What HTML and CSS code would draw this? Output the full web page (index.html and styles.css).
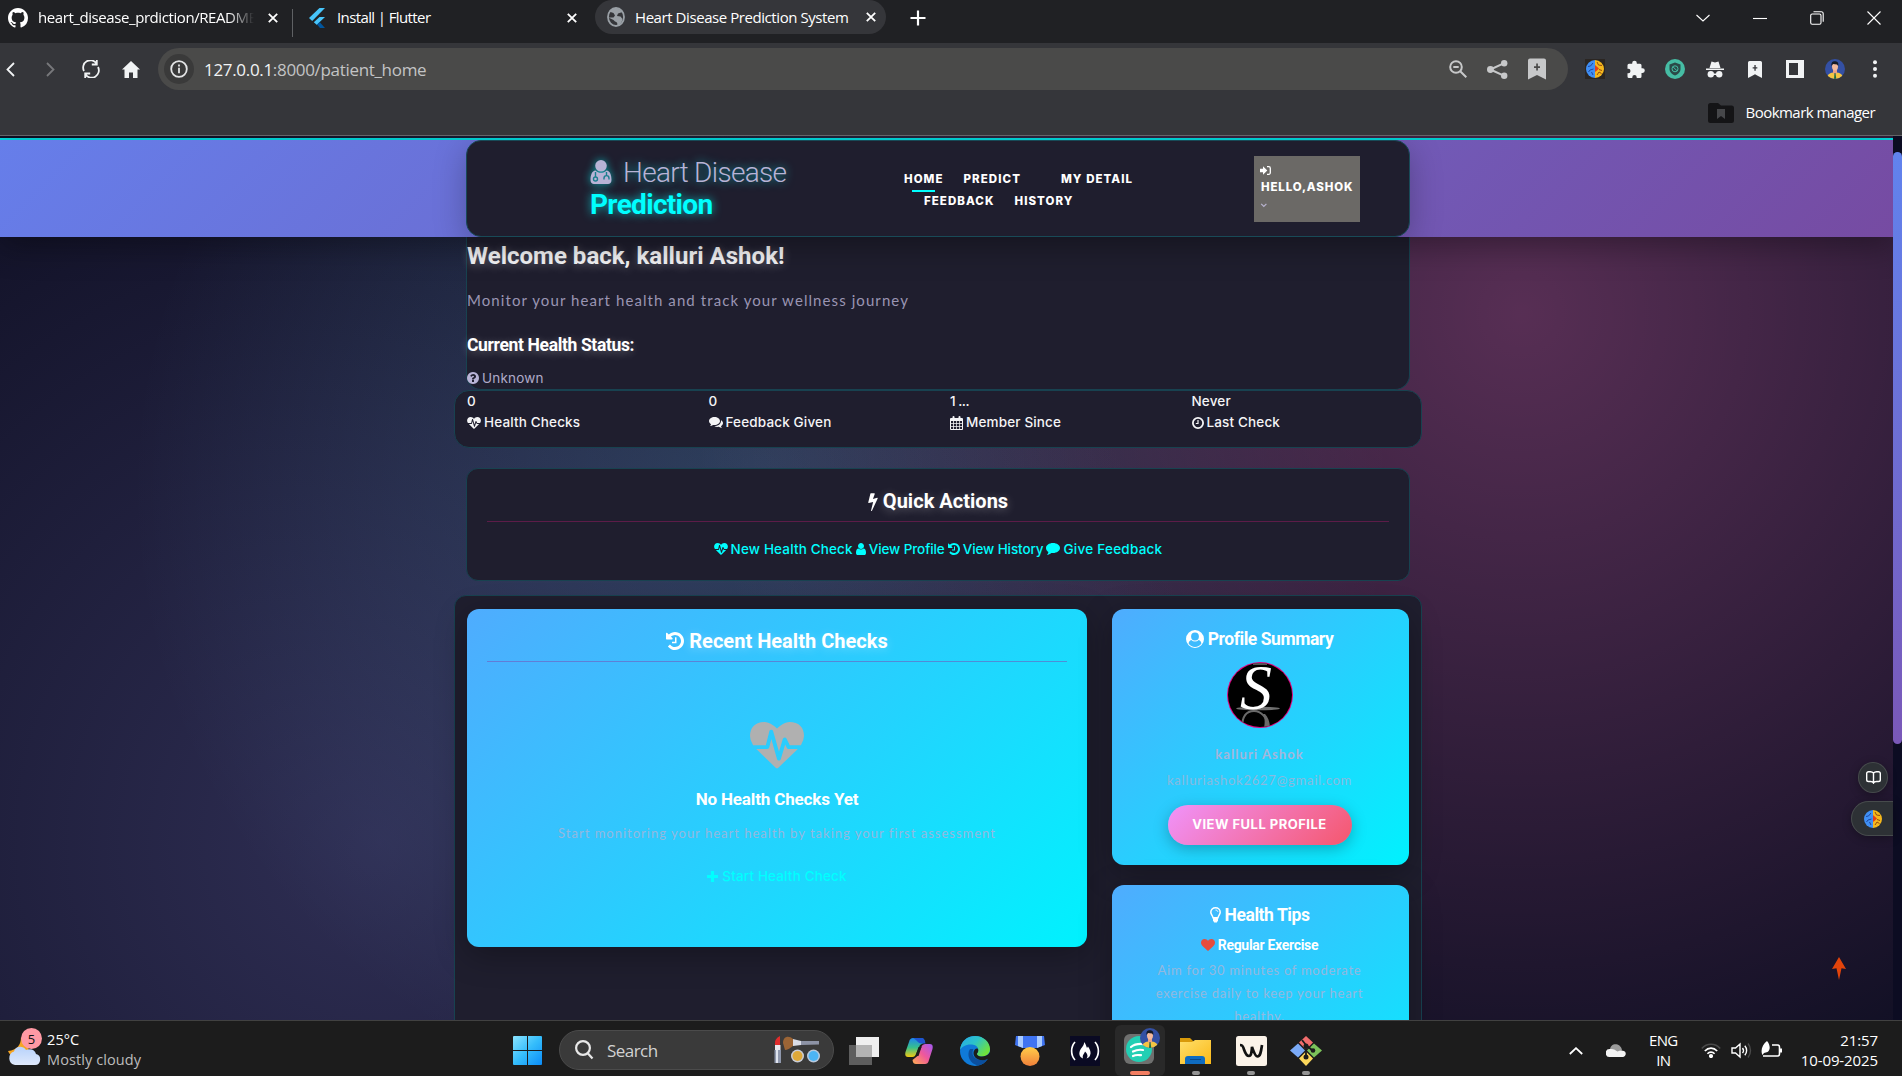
FILE: index.html
```html
<!DOCTYPE html>
<html lang="en">
<head>
<meta charset="utf-8">
<title>Heart Disease Prediction System</title>
<link rel="stylesheet" href="styles.css">
</head>
<body>
<svg class="defs" width="0" height="0" aria-hidden="true">
  <defs>
    <linearGradient id="gWin" x1="0" y1="0" x2="1" y2="1"><stop offset="0" stop-color="#8be4ff"/><stop offset=".5" stop-color="#35bdfb"/><stop offset="1" stop-color="#0b8cf8"/></linearGradient>
    <linearGradient id="gEdge" x1="0" y1="0" x2="1" y2=".6"><stop offset="0" stop-color="#27a8e8"/><stop offset=".5" stop-color="#2cc3c9"/><stop offset="1" stop-color="#6fe23c"/></linearGradient>
    <linearGradient id="gCloud" x1="0" y1="0" x2="0" y2="1"><stop offset="0" stop-color="#b7d2fb"/><stop offset="1" stop-color="#dfe9fb"/></linearGradient>
    <linearGradient id="gCopA" x1="0" y1="0" x2="0" y2="1"><stop offset="0" stop-color="#1e86f0"/><stop offset=".5" stop-color="#37c08c"/><stop offset="1" stop-color="#f3c911"/></linearGradient>
    <linearGradient id="gCopB" x1="1" y1="0" x2="0" y2="1"><stop offset="0" stop-color="#a259f3"/><stop offset=".5" stop-color="#f0589a"/><stop offset="1" stop-color="#ffae52"/></linearGradient>
    <linearGradient id="gMedal" x1="0" y1="0" x2="0" y2="1"><stop offset="0" stop-color="#ffce4a"/><stop offset="1" stop-color="#f0803a"/></linearGradient>
    <linearGradient id="gFolder" x1="0" y1="0" x2="1" y2="1"><stop offset="0" stop-color="#ffdf6b"/><stop offset="1" stop-color="#fbb917"/></linearGradient>
    <clipPath id="cAvatar"><circle cx="33" cy="33" r="32"/></clipPath>
    <clipPath id="cFace"><circle cx="10" cy="10" r="10"/></clipPath>
  </defs>
  <symbol id="heartbeat" viewBox="0 0 1792 1560"><path d="M1280 896h305q-5 6-10 10.500t-9 7.500l-3 4-623 600q-18 18-44 18t-44-18l-624-602q-5-2-21-20h369q22 0 39.500-13.500t22.500-34.500l70-281 190 667q6 20 23 33t39 13q21 0 38-13t23-33l146-485 56 112q18 35 57 35zm512-428q0 145-103 300h-369l-111-221q-8-17-25.500-27t-36.500-8q-45 5-56 46l-129 430-196-686q-6-20-23.500-33t-39.500-13-39 13.500-22 34.500l-116 464h-423q-103-155-103-300 0-220 127-344t351-124q62 0 126.500 21.500t120 58 95.500 68.500 76 68q36-36 76-68t95.500-68.500 120-58 126.500-21.500q224 0 351 124t127 344z"/></symbol>
  <symbol id="bolt" viewBox="448 0 900 1792"><path d="M1333 566q18 20 7 44l-540 1157q-13 25-42 25-4 0-14-2-17-5-25.500-19t-4.500-30l197-808-406 101q-4 1-12 1-18 0-31-11-18-15-13-39l201-825q4-14 16-23t28-9h328q19 0 32 12.500t13 29.500q0 8-5 18l-171 463 396-98q8-2 12-2 19 0 34 15z"/></symbol>
  <symbol id="user" viewBox="256 128 1280 1536"><path d="M1536 1399q0 109-62.500 187t-150.500 78h-854q-88 0-150.500-78t-62.500-187q0-85 8.500-160.500t31.500-152 58.500-131 94-89 134.500-34.500q131 128 313 128t313-128q76 0 134.500 34.500t94 89 58.500 131 31.500 152 8.500 160.500zm-256-887q0 159-112.500 271.500t-271.500 112.500-271.500-112.500-112.500-271.500 112.500-271.500 271.500-112.500 271.500 112.500 112.500 271.500z"/></symbol>
  <symbol id="history" viewBox="128 128 1536 1536"><path d="M1664 896q0 156-61 298t-164 245-245 164-298 61q-172 0-327-72.500t-264-204.500q-7-10-6.500-22.500t8.500-20.500l137-138q10-9 25-9 16 2 23 12 73 95 179 147t225 52q104 0 198.500-40.500t163.500-109.500 109.500-163.500 40.500-198.500-40.500-198.500-109.500-163.500-163.500-109.500-198.500-40.500q-98 0-188 35.500t-160 101.500l137 138q31 30 14 69-17 40-59 40h-448q-26 0-45-19t-19-45v-448q0-42 40-59 39-17 69 14l130 129q107-101 244.500-156.500t284.500-55.500q156 0 298 61t245 164 164 245 61 298zm-640-288v448q0 14-9 23t-23 9h-320q-14 0-23-9t-9-23v-64q0-14 9-23t23-9h224v-352q0-14 9-23t23-9h64q14 0 23 9t9 23z"/></symbol>
  <symbol id="heart" viewBox="0 128 1792 1536"><path d="M896 1664q-26 0-44-18l-624-602q-10-8-27.500-26t-55.500-65.500-68-97.500-53.500-121-23.500-138q0-220 127-344t351-124q62 0 126.500 21.500t120 58 95.500 68.500 76 68q36-36 76-68t95.500-68.500 120-58 126.500-21.500q224 0 351 124t127 344q0 221-229 450l-623 600q-18 18-44 18z"/></symbol>
  <symbol id="question" viewBox="128 128 1536 1536"><path d="M1024 1376v-192q0-14-9-23t-23-9h-192q-14 0-23 9t-9 23v192q0 14 9 23t23 9h192q14 0 23-9t9-23zm256-672q0-88-55.500-163t-138.500-116-170-41q-243 0-371 213-15 24 8 42l132 100q7 6 19 6 16 0 25-12 53-68 86-92 34-24 86-24 48 0 85.500 26t37.500 59q0 38-20 61t-68 45q-63 28-115.500 86.500t-52.500 125.500v36q0 14 9 23t23 9h192q14 0 23-9t9-23q0-19 21.500-49.500t54.500-49.500q32-18 49-28.500t46-35 44.500-48 28-60.500 12.500-81zm384 192q0 209-103 385.500t-279.500 279.500-385.500 103-385.500-103-279.500-279.500-103-385.500 103-385.500 279.500-279.500 385.500-103 385.500 103 279.500 279.500 103 385.500z"/></symbol>
  <symbol id="comments" viewBox="0 0 14 12"><path d="M5.500 0C8.500 0 11 1.800 11 4S8.500 8 5.500 8c-.5 0-1 0-1.400-.1C3.200 8.600 2 9 1 9.100c.5-.5.9-1.100 1-1.900C.8 6.500 0 5.300 0 4c0-2.200 2.500-4 5.500-4z"/><path d="M12 3.200c1.200.7 2 1.700 2 2.900s-.8 2.300-2 3.100c.1.700.5 1.300 1 1.800-1.200-.1-2.300-.5-3.200-1.200-1.400.3-3.300.1-4.400-.7C9 9 12 7 12 4z"/></symbol>
  <symbol id="comment" viewBox="0 0 14 12"><path d="M7 0c3.900 0 7 2.200 7 5s-3.100 5-7 5c-.6 0-1.100 0-1.600-.1C4 11 2.600 11.700 1 11.900c.8-.8 1.300-1.700 1.400-2.900C.9 8.100 0 6.600 0 5c0-2.800 3.100-5 7-5z"/></symbol>
  <symbol id="calendar" viewBox="0 0 13 14"><path fill-rule="evenodd" d="M1 2h1.500V1a1 1 0 0 1 2 0v1h4V1a1 1 0 0 1 2 0v1H12a1 1 0 0 1 1 1v10a1 1 0 0 1-1 1H1a1 1 0 0 1-1-1V3a1 1 0 0 1 1-1zM1 5v2h2.200V5zm3 0v2h2.200V5zm2.900 0v2h2.200V5zm2.900 0v2H12V5zM1 7.700V10h2.200V7.700zm3 0V10h2.200V7.700zm2.900 0V10h2.200V7.700zm2.900 0V10H12V7.700zM1 10.700V13h2.200v-2.300zm3 0V13h2.200v-2.300zm2.900 0V13h2.200v-2.300zm2.900 0V13H12v-2.300z"/></symbol>
  <symbol id="clock" viewBox="0 0 12 12"><circle cx="6" cy="6" r="5.100" fill="none" stroke="currentColor" stroke-width="1.800"/><path d="M6 3v3.500H3.800" fill="none" stroke="currentColor" stroke-width="1.200"/></symbol>
  <symbol id="usercircle" viewBox="0 0 18 18"><path fill-rule="evenodd" d="M9 0a9 9 0 1 1 0 18A9 9 0 0 1 9 0zM9 2.600a3.900 3.900 0 1 0 0 7.800 3.900 3.900 0 0 0 0-7.800zM5.300 9.900c-1.500.3-2.500 1.500-2.700 3.700a7.800 7.800 0 0 0 12.800 0c-.2-2.200-1.200-3.400-2.700-3.700a5.300 5.300 0 0 1-7.400 0z"/></symbol>
  <symbol id="bulb" viewBox="0 0 11 16"><path d="M5.500.8c2.600 0 4.700 1.900 4.700 4.400 0 2.200-2 3.300-2.200 5.600H3C2.800 8.500.8 7.400.8 5.200.8 2.700 2.900.8 5.500.8z" fill="none" stroke="currentColor" stroke-width="1.500"/><path d="M3 10.600h5v3L6.800 15.500H4.200L3 13.600z"/><path d="M5.500 3c1.200 0 2.200.6 2.300 1.800" fill="none" stroke="currentColor" stroke-width=".9"/></symbol>
  <symbol id="doctor" viewBox="0 0 21 24"><path d="M10.500 0a5.800 5.800 0 1 1 0 11.600 5.800 5.800 0 0 1 0-11.600zM5 10.500c1.500 1.500 3.300 2.300 5.500 2.300s4-.8 5.500-2.300c3.500.4 5 4.500 5 9.500 0 2.500-1.500 4-3.500 4h-14C1.500 24 0 22.500 0 20c0-5 1.500-9.100 5-9.500z"/><path class="stetho" d="M5 12v5M13.500 19.500v-1.300c0-3.400 5-3.400 5 0v1.300M16 12v3.500"/><circle class="stetho" cx="5" cy="19" r="2"/></symbol>
  <symbol id="globe" viewBox="0 0 18 20"><ellipse cx="9" cy="10" rx="8" ry="9" fill="none" stroke="#9aa0a6" stroke-width="1.800"/><path d="M2 4.500C4 1 12 0 15.500 5L11 6.500 10 9l3.500.5 2 2.500c-.5 3.500-3 6-5.500 7 1-2.500 0-4-2-4.500L6.500 13 1.500 10.500h5L8 8.500 6.500 6z" fill="#9aa0a6"/></symbol>
  <symbol id="ribbonplus" viewBox="0 0 18 21"><path fill-rule="evenodd" d="M2 0h14a2 2 0 0 1 2 2v19l-5-2.500L9 16.500l-4 2L0 21V2a2 2 0 0 1 2-2zm6.200 5v2.700H6v1.700h2.200V12h1.700V9.400H12V7.700H9.900V5z"/></symbol>
  <symbol id="brain" viewBox="0 0 18 18"><path d="M9 0a9 9 0 0 0 0 18z" fill="#3f8ff5"/><path d="M9 0a9 9 0 0 1 0 18z" fill="#f5b81c"/><path d="M7 3 4.500 6 2 6.500M7.500 9 4 10l-1.500 2M7 15l-1.500-3" fill="none" stroke="#1c3f96" stroke-width=".9"/><path d="m11 2 1.500 3 3.500.5M13 9.500l3 1M11 15l2-3 2.500 1.500" fill="none" stroke="#8a3d10" stroke-width=".9"/><path d="m9 5 4 3.500-2 2L9 12z" fill="#e2401c"/></symbol>
  <symbol id="face" viewBox="0 0 20 20"><g clip-path="url(#cFace)"><path d="M0 0h20v20H0z" fill="#3450a4"/><path d="M2 20c0-5 3-6.500 8-6.500s8 1.500 8 6.500z" fill="#f4c542"/><path d="M8 10h4v4l-2 2-2-2z" fill="#e9a184"/><ellipse cx="10" cy="7.500" rx="3" ry="4" fill="#f5b99c"/><path d="M6.500 7c-.6-4 1.500-5 4-4.700 2.500.2 3.300 2 2.700 4.700L12 5.500 8 5z" fill="#161a26"/><path d="m9.500 14 1 0 .8 6H9z" fill="#1d6b45"/></g></symbol>
</svg>

<div class="screen">
  <div class="tabs">
    <svg class="tab-gh" width="20" height="20" viewBox="0 0 16 16" fill="#fff"><path d="M8 0C3.580 0 0 3.580 0 8c0 3.540 2.290 6.530 5.470 7.590.4.070.55-.17.55-.38 0-.19-.01-.82-.01-1.490-2.010.37-2.530-.49-2.690-.94-.09-.23-.48-.94-.82-1.130-.28-.15-.68-.52-.01-.53.63-.01 1.080.58 1.230.82.72 1.210 1.870.87 2.330.66.070-.52.280-.87.510-1.070-1.780-.2-3.640-.89-3.640-3.950 0-.87.310-1.590.820-2.150-.08-.2-.36-1.020.080-2.120 0 0 .67-.21 2.200.820.640-.18 1.320-.27 2-.27s1.360.090 2 .27c1.530-1.040 2.200-.82 2.200-.82.440 1.100.160 1.920.080 2.120.510.560.820 1.270.820 2.150 0 3.070-1.870 3.750-3.650 3.950.290.250.540.730.540 1.480 0 1.070-.01 1.930-.01 2.200 0 .210.150.460.550.380A8.010 8.010 0 0 0 16 8c0-4.420-3.580-8-8-8z"/></svg>
    <span class="tab-title faded">heart_disease_prdiction/README</span>
    <svg class="x1" width="10" height="10" viewBox="0 0 10 10"><path class="cross" d="M.8.800l8.400 8.400M9.200.8.800 9.200"/></svg>
    <i class="tab-sep"></i>
    <svg class="tab-fl" width="16" height="20" viewBox="0 0 16 20"><path d="M10.500 0H16L3.200 13 0 10z" fill="#47c5fb"/><path d="M10.500 9H16l-5.800 5.600L8 17l-3.200-2.800z" fill="#47c5fb"/><path d="m8 16.500 2.600-2.400L16 20h-5z" fill="#00569e"/></svg>
    <span class="tab-title narrow">Install | Flutter</span>
    <svg class="x2" width="10" height="10" viewBox="0 0 10 10"><path class="cross" d="M.8.800l8.400 8.400M9.200.8.800 9.200"/></svg>
    <div class="tab-active">
      <svg width="18" height="20"><use href="#globe"/></svg>
      <span class="tab-title">Heart Disease Prediction System</span>
      <svg width="10" height="10" viewBox="0 0 10 10"><path class="cross" d="M.8.800l8.400 8.400M9.200.8.800 9.200"/></svg>
    </div>
    <svg class="tab-new" width="16" height="16" viewBox="0 0 16 16"><path d="M8 .5v15M.5 8h15" stroke="#fff" stroke-width="2.200"/></svg>
    <div class="win-ctl">
      <svg width="14" height="14" viewBox="0 0 14 14"><path d="m.5 4 6.500 6 6.500-6"/></svg>
      <svg width="14" height="14" viewBox="0 0 14 14"><path d="M0 7.500h14"/></svg>
      <svg width="14" height="14" viewBox="0 0 14 14"><rect x=".7" y="3" width="10.300" height="10.300" rx="1.500"/><path d="M3.500.7h7.700a2 2 0 0 1 2 2v8"/></svg>
      <svg width="14" height="14" viewBox="0 0 14 14"><path d="m.5.500 13 13M13.500.500l-13 13"/></svg>
    </div>
  </div>

  <div class="toolbar">
    <svg class="t-back" width="9" height="15" viewBox="0 0 9 15"><path d="M8 1 1.500 7.500 8 14" fill="none" stroke="#f1f3f4" stroke-width="1.800"/></svg>
    <svg class="t-fwd" width="9" height="15" viewBox="0 0 9 15"><path d="m1 1 6.500 6.500L1 14" fill="none" stroke="#77787b" stroke-width="1.800"/></svg>
    <svg class="t-reload" width="18" height="18" viewBox="0 0 18 18"><path d="M14.500 3.500A7.300 7.300 0 0 0 2 11M3.500 14.500A7.300 7.300 0 0 0 16 7M14.800 0v4.500h-5M3.200 18v-4.500h5" fill="none" stroke="#f1f3f4" stroke-width="1.800"/></svg>
    <svg class="t-home" width="18" height="17" viewBox="0 0 18 17"><path d="M9 0l9 8.500h-2.500V17H11v-5.500H7V17H2.500V8.500H0z" fill="#f1f3f4"/></svg>
    <div class="omnibox">
      <span class="info"><svg width="18" height="18" viewBox="0 0 18 18"><circle cx="9" cy="9" r="7.800" fill="none" stroke="#e4e5e6" stroke-width="1.800"/><path d="M9 7.800v5.500M9 4.500v2" stroke="#e4e5e6" stroke-width="1.800"/></svg></span>
      <span class="url"><b>127.0.0.1</b>:8000/patient_home</span>
      <svg width="18" height="18" viewBox="0 0 18 18" fill="none" stroke="#c7c8c9" stroke-width="2"><circle cx="7" cy="7" r="5.800"/><path d="m11 11 6.300 6.300M4.300 7h5.400"/></svg>
      <svg width="21" height="19" viewBox="0 0 21 19" fill="#c7c8c9"><circle cx="3.400" cy="9.500" r="3.400"/><circle cx="17.200" cy="3.200" r="3.200"/><circle cx="17.200" cy="15.800" r="3.200"/><path d="m3.400 9.500 13.800-6.300M3.400 9.500l13.800 6.300" stroke="#c7c8c9" stroke-width="2"/></svg>
      <svg width="18" height="22" fill="#c7c8c9"><use href="#ribbonplus"/></svg>
    </div>
    <div class="exts">
      <svg width="20" height="20" viewBox="-1 -1 20 20"><path d="M-1-1h20v20H-1z" fill="#2b2622"/><use href="#brain" width="18" height="18"/></svg>
      <svg width="19" height="19" viewBox="0 0 19 19" fill="#f1f3f4"><path d="M6.200 3.800V3a2.300 2.300 0 0 1 4.600 0v.8h3.200A1.500 1.500 0 0 1 15.500 5.300v3h1a2.300 2.300 0 0 1 0 4.600h-1v3.600A1.500 1.500 0 0 1 14 18h-3.300v-.8a2.200 2.200 0 0 0-4.400 0v.8H3a1.500 1.500 0 0 1-1.500-1.500v-3.300h.8a2.200 2.200 0 0 0 0-4.400h-.8V5.300A1.500 1.500 0 0 1 3 3.800z"/></svg>
      <svg width="20" height="20" viewBox="0 0 20 20"><circle cx="10" cy="10" r="10" fill="#46bda4"/><path d="m10 3.500 5.500 2V10c0 3-2.500 5.500-5.500 6.500C7 15.500 4.500 13 4.500 10V5.500z" fill="#2b4a48"/><circle cx="10" cy="9.800" r="3" fill="none" stroke="#46bda4"/><path d="m8 7.800 4 4" stroke="#46bda4"/></svg>
      <svg width="18" height="17" viewBox="0 0 18 17" fill="#f1f3f4"><path d="M5.500.5 9 1.500l3.500-1L14.500 7h-11zM0 7.500h18V9H0z"/><circle cx="4.800" cy="13.300" r="3.200"/><circle cx="13.200" cy="13.300" r="3.200"/><path d="M6 12.500h6v1.500H6z"/></svg>
      <svg width="14" height="17" viewBox="0 0 18 21" preserveAspectRatio="none" fill="#f1f3f4"><use href="#ribbonplus" width="18" height="21"/></svg>
      <svg width="18" height="18" viewBox="0 0 18 18"><path fill-rule="evenodd" d="M0 0h18v18H0zm3 3v12h9V3z" fill="#f1f3f4"/></svg>
      <svg width="20" height="20"><use href="#face"/></svg>
      <svg width="4" height="18" viewBox="0 0 4 18" fill="#f1f3f4"><circle cx="2" cy="2.200" r="2"/><circle cx="2" cy="9" r="2"/><circle cx="2" cy="15.800" r="2"/></svg>
    </div>
  </div>

  <div class="bookmarks">
    <svg width="26" height="20" viewBox="0 0 26 20"><path d="M2.500 0H10l3 2.500h10.500A2.500 2.500 0 0 1 26 5v12.500a2.500 2.500 0 0 1-2.500 2.500h-21A2.500 2.500 0 0 1 0 17.500v-15A2.500 2.500 0 0 1 2.500 0z" fill="#141416"/><path d="M9 6h8v10l-4-3-4 3z" fill="#46474a"/></svg>
    <span>Bookmark manager</span>
  </div>

  <main class="page">
    <div class="progress"></div>
    <header class="site-header">
      <div class="header-card">
        <div class="brand">
          <div class="brand-top"><svg width="22" height="24"><use href="#doctor"/></svg><span>Heart Disease</span></div>
          <strong>Prediction</strong>
        </div>
        <nav class="nav">
          <div class="nav-row"><a class="current">HOME</a><a>PREDICT</a><a class="wide">MY DETAIL</a></div>
          <div class="nav-row second"><a>FEEDBACK</a><a>HISTORY</a></div>
        </nav>
        <div class="account">
          <svg width="11" height="9" viewBox="0 0 11 9" fill="#fff"><path d="M0 2.700h3V.3L7.300 4.500 3 8.700V6.300H0z"/><path d="M7 .7h1.800a1.500 1.500 0 0 1 1.500 1.500v4.600a1.500 1.500 0 0 1-1.500 1.500H7" fill="none" stroke="#fff" stroke-width="1.300"/></svg>
          <span>HELLO,ASHOK</span>
          <svg width="8" height="5" viewBox="0 0 8 5"><path d="m1.200.8 2.600 2.700L6.400.8" fill="none" stroke="#b8b3cf" stroke-width="1.200"/></svg>
        </div>
      </div>
    </header>

    <div class="content">
      <section class="welcome">
        <h1>Welcome back, kalluri Ashok!</h1>
        <p>Monitor your heart health and track your wellness journey</p>
        <h2>Current Health Status:</h2>
        <div class="unknown"><svg width="12" height="12"><use href="#question"/></svg><span>Unknown</span></div>
      </section>

      <section class="stats">
        <div><b>0</b><span><svg width="14" height="12"><use href="#heartbeat"/></svg>Health Checks</span></div>
        <div><b>0</b><span><svg width="14" height="12"><use href="#comments"/></svg>Feedback Given</span></div>
        <div><b class="tight">1 ...</b><span><svg width="13" height="14"><use href="#calendar"/></svg>Member Since</span></div>
        <div><b>Never</b><span><svg width="12" height="12"><use href="#clock"/></svg>Last Check</span></div>
      </section>

      <section class="quick">
        <h2 class="ruled"><svg width="10" height="19"><use href="#bolt"/></svg>Quick Actions</h2>
        <div class="links">
          <a class="l1"><svg width="14" height="12"><use href="#heartbeat"/></svg>New Health Check</a>
          <a class="l2"><svg width="10" height="12"><use href="#user"/></svg>View Profile</a>
          <a class="l2"><svg width="12" height="12"><use href="#history"/></svg>View History</a>
          <a class="l3"><svg width="14" height="12"><use href="#comment"/></svg>Give Feedback</a>
        </div>
      </section>

      <section class="board">
        <article class="card recent">
          <h2 class="ruled"><svg width="18" height="18"><use href="#history"/></svg>Recent Health Checks</h2>
          <svg class="big-heart" width="54" height="47"><use href="#heartbeat"/></svg>
          <h3>No Health Checks Yet</h3>
          <p>Start monitoring your heart health by taking your first assessment</p>
          <a><svg width="11" height="11" viewBox="0 0 11 11"><path d="M3.900 0h3.200v3.900H11v3.200H7.100V11H3.900V7.100H0V3.900h3.900z"/></svg>Start Health Check</a>
        </article>
        <div class="side">
          <article class="card profile">
            <h3><svg width="18" height="18"><use href="#usercircle"/></svg>Profile Summary</h3>
            <svg class="avatar" width="66" height="66" viewBox="0 0 66 66"><circle cx="33" cy="33" r="33" fill="#e6007e"/><circle cx="33" cy="33" r="32"/><g clip-path="url(#cAvatar)"><ellipse cx="31" cy="46.500" rx="22" ry="1.800" fill="#6f6f6f"/><path d="M26 2h14" stroke="#aaa"/><path d="M15 66C15 54 20 49 27 49s13 6 15 17" fill="none" stroke="#6a6a6a" stroke-width="2"/><path d="M38 52c3 3 5 8 5 14h-6c1-5 1-10-1-14z" fill="#6a6a6a"/><text x="13" y="46.500" class="mono" fill="#fff">S</text></g></svg>
            <p class="name">kalluri Ashok</p>
            <p class="mail">kalluriashok2627@gmail.com</p>
            <a class="btn">VIEW FULL PROFILE</a>
          </article>
          <article class="card tips">
            <h3><svg width="11" height="16"><use href="#bulb"/></svg>Health Tips</h3>
            <h4><svg width="14" height="12" fill="#e74c3c"><use href="#heart"/></svg>Regular Exercise</h4>
            <p>Aim for 30 minutes of moderate<br>exercise daily to keep your heart<br>healthy.</p>
          </article>
        </div>
      </section>
    </div>

    <div class="scroll"><i></i></div>
    <div class="float reader"><svg width="15" height="13" viewBox="0 0 15 13" fill="none" stroke="#fff" stroke-width="1.400"><path d="M7.500 2C6.500 1 5.500.7 4.500.7h-2A1.800 1.800 0 0 0 .7 2.500v6.200a1.800 1.800 0 0 0 1.800 1.800h2c1.200 0 2.500.5 3 1.500.5-1 1.800-1.500 3-1.500h2a1.800 1.800 0 0 0 1.800-1.800V2.500A1.800 1.800 0 0 0 12.500.7h-2c-1 0-2 .3-3 1.300zm0 0v10.500"/></svg></div>
    <div class="float helper"><svg width="18" height="18"><use href="#brain"/></svg></div>
    <svg class="to-top" width="14" height="23" viewBox="0 0 14 23"><path d="M7 0l7 12-4.500-.8L7 23 4.500 11.200 0 12z" fill="#e2440b"/></svg>
  </main>

  <footer class="taskbar">
    <div class="weather">
      <svg width="34" height="38" viewBox="0 0 34 38"><path d="M13 9c0 8-4 13-13 14 2 5 8 9 15 7 6-2 7-10 4-14z" fill="#f5a524"/><path d="M7 37a7 7 0 0 1-1-13.500C7 18 15 17 18 22c5-2 9 0 10 4a5.600 5.600 0 0 1-1 11z" fill="url(#gCloud)"/><circle cx="23.500" cy="10.500" r="10.500" fill="#ff99a4"/><text x="23.500" y="15.500" text-anchor="middle" class="badge">5</text></svg>
      <div class="w-text"><span>25°C</span><span class="dim">Mostly cloudy</span></div>
    </div>
    <svg class="win" width="29" height="29" viewBox="0 0 29 29" fill="url(#gWin)"><path d="M1 0h13v14H0V1a1 1 0 0 1 1-1zM15 0h13a1 1 0 0 1 1 1v13H15zM0 15h14v14H1a1 1 0 0 1-1-1zM15 15h14v13a1 1 0 0 1-1 1H15z"/></svg>
    <div class="search">
      <svg width="19" height="20" viewBox="0 0 19 20" fill="none" stroke="#e8e8e8" stroke-width="2.200"><circle cx="8" cy="8" r="6.900"/><path d="m12.500 13 5 5.500"/></svg>
      <span>Search</span>
      <svg width="47" height="28" viewBox="0 0 47 28"><path d="M1 7c0-4 3-6 5-7v9H1z" fill="#e02c2c"/><path d="M1 9h5.500v5H1z" fill="#e8e8ee"/><path d="M.5 14H7v13H.5z" fill="#8f98ad"/><path d="M2 14h2v13H2z" fill="#dfe4ee"/><path d="M9 7c0-7 6-8 10-4l1 6c-3 3-7 5-9 5z" fill="#9b6536"/><path d="M19 3l8 2v4l-8 1z" fill="#d9dce6"/><path d="M27 5h18v3.500L27 9z" fill="#8d93a6"/><circle cx="23.500" cy="20" r="6.500" fill="#c9ccd6"/><circle cx="23.500" cy="20" r="5" fill="#dda83a"/><circle cx="39.500" cy="20" r="6.500" fill="#b9c9dd"/><circle cx="39.500" cy="20" r="5" fill="#4db4f4"/></svg>
    </div>
    <div class="apps">
      <span class="app"><svg width="30" height="28" viewBox="0 0 30 28"><path d="M7 0h23v20H7z" fill="#efefef"/><path d="M0 8h23v20H0z" fill="#666" opacity=".9"/><path d="M7 8h16v12H7z" fill="#b3b3b3"/></svg></span>
      <span class="app"><svg width="28" height="26" viewBox="0 0 28 26"><path d="M8 0h8c2 0 3 1 4 4l-5 3-4 9c-1 3-3 3-5 3H3c-3 0-3-3-2.500-5L4 4c.8-3 2-4 4-4z" fill="url(#gCopA)"/><path d="M20 26h-9c-2 0-3-1-3.500-4l5-4 4-9c1-3 3-3 5-3H25c3 0 3 3 2.500 5L24 22c-.8 3-2 4-4 4z" fill="url(#gCopB)"/><path d="M8 0h9c2 0 3 2 3.500 5.500h-4C13 5.500 12 2 8 0z" fill="#1d55d0"/><path d="m13.500 9 3 0-3 9h-3z" fill="#1c1c1c"/></svg></span>
      <span class="app"><svg width="30" height="30" viewBox="0 0 30 30"><circle cx="15" cy="15" r="15" fill="#0f7ad8"/><path d="M0 14C1 5 7 0 15 0c9 0 15 6.500 15 13 0 5-4 7.500-8 7.500-3.500 0-5.500-1.500-5-3 2.500-2.500 2-8.500-5-9C6 8 1.500 11 0 14z" fill="url(#gEdge)"/><path d="M10 13c-4 6 0 15 8 16.500 4-.5 8-3.500 9.500-6.500-6 3-15 0-15-6 0-2 .5-3 1-4z" fill="#0b4f9e"/><path d="M17 17.500c-.5 1.500 1.500 3 5 3 2.500 0 5-1 6.500-2.500L30 16v6l-2.500 1c-6 3-14 0-14-6 0-3 3-5.500 4.500-4 .5 2 .3 3-1 4.500z" fill="#1c1c1c"/></svg></span>
      <span class="app"><svg width="30" height="30" viewBox="0 0 30 30"><path d="M1 0h28l1 9-8 3H8L0 9z" fill="#3f74f2"/><path d="M3 0h5v12l-5-2zM22 0h5v10l-5 2z" fill="#a9cbff"/><circle cx="15" cy="20.500" r="9.500" fill="url(#gMedal)"/></svg></span>
      <span class="app"><svg width="30" height="30" viewBox="0 0 30 30"><path d="M0 0h30v30H0z" fill="#0a0a23"/><path d="M5 6c-4.500 5-4.500 13 0 18M25 6c4.500 5 4.500 13 0 18" fill="none" stroke="#fff" stroke-width="1.700"/><path d="M14 6c2 2 2 4 3 6l1-1.500c2 3 3.500 6 2 9-.8 1.800-2 2.500-3.500 3 1.500-2 1.500-4-1.500-7-.5 2-3 3.500-2 7-4-1.500-4.500-5.500-2.500-9C12 11 14.500 9 14 6z" fill="#fff"/></svg></span>
      <span class="app running"><svg width="38" height="38" viewBox="0 0 38 38"><rect x="1" y="7" width="30" height="30" rx="6" fill="#6f706f"/><circle cx="16" cy="22" r="13" fill="#22cfb4"/><path d="M8 20c4-3.500 10-3.500 15-2.700M10 24.500c4-2 7-2 10-1.500M10 29c3-1.500 5-1 8-.8" fill="none" stroke="#fff" stroke-width="2.200" stroke-linecap="round"/><use href="#face" x="17" y="1" width="20" height="20"/></svg><i class="bar"></i></span>
      <span class="app"><svg width="31" height="27" viewBox="0 0 31 27"><path d="M0 1h10l3 3v3H0z" fill="#d99a0a"/><path d="M0 5h12l3-2h16v24H0z" fill="url(#gFolder)"/><path d="M5 27v-5a3 3 0 0 1 3-3h14a3 3 0 0 1 3 3v5z" fill="#0f6cc0"/><path d="M10 22.500h11" stroke="#0b4a8a"/></svg><i class="dot"></i></span>
      <span class="app"><svg width="31" height="30" viewBox="0 0 31 30"><rect width="31" height="30" rx="2.500" fill="#fbf3e9"/><path d="M4 9c3 0 3 1.500 4 4.500S10.500 20 13 20s2.500-4 3-9c1.500 4 3 9.500 5.500 9.500 3 0 3.500-5 4.500-11.500" fill="none" stroke="#111" stroke-width="2.700"/></svg><i class="dot"></i></span>
      <span class="app"><svg width="32" height="30" viewBox="0 0 32 30"><path d="m16 0 7 6.500-7 7-7-7z" fill="#f26d6d"/><path d="m8 7.500 7 7-7 7-8-7z" fill="#7baaf7"/><path d="m24 7.500 8 7-8 7-7-7z" fill="#7cc35a"/><path d="m16 15.500 7 7L16 30l-7-7.500z" fill="#fbd75b"/><path d="M12 4l4 5v13M16 9l7 6" fill="none" stroke="#1c1c1c" stroke-width="1.800"/><circle cx="16" cy="10" r="2.500" fill="#1c1c1c"/><circle cx="16" cy="21" r="2.500" fill="#1c1c1c"/><circle cx="23" cy="14.500" r="2.300" fill="#1c1c1c"/></svg><i class="dot"></i></span>
    </div>
    <div class="tray">
      <svg class="up" width="14" height="8" viewBox="0 0 14 8"><path d="m.8 7 6.200-5.800L13.200 7" fill="none" stroke="#fff" stroke-width="1.800"/></svg>
      <svg class="cloud" width="20" height="13" viewBox="0 0 20 13"><path d="M4 6c0-7 10-8 12 0l-6 6z" fill="#9b9b9b"/><path d="M4 13a4 4 0 0 1-.5-8c4-.5 6 1 8 2.500 2-1 4.500-1.500 6.500-.5a3.200 3.200 0 0 1-.8 6z" fill="#f3f3f3"/></svg>
      <div class="lang"><span>ENG</span><span>IN</span></div>
      <svg class="wifi" width="20" height="15" viewBox="0 0 20 15" fill="none" stroke="#fff" stroke-width="1.600"><path d="M.8 5.500c5-5.600 13.400-5.600 18.400 0" stroke="#4a4a4a"/><path d="M3.800 8c3.600-3.800 8.800-3.800 12.400 0M6.400 10.800c2-2.300 5.200-2.300 7.200 0"/><circle cx="10" cy="13" r="1.300" fill="#fff"/></svg>
      <svg class="vol" width="21" height="17" viewBox="0 0 21 17" fill="none" stroke="#fff" stroke-width="1.400"><path d="M1 6h3.500L9 2v13l-4.500-4H1zM11.500 6a4 4 0 0 1 0 5M13.800 3.800a7 7 0 0 1 0 9.400"/><path d="M17 1.500a11 11 0 0 1 0 14" stroke="#4a4a4a"/></svg>
      <svg class="bat" width="21" height="17" viewBox="0 0 21 17"><path d="M11 4h5.500a2 2 0 0 1 2 2v7a2 2 0 0 1-2 2H2" fill="none" stroke="#fff" stroke-width="1.600"/><path d="M19 7.500h2v4h-2zM6 0c3.500 4 3.500 9 .5 11L3 12l-1.500 2-.5-1C-.5 8 2 3 6 0z" fill="#fff"/></svg>
      <div class="clock"><span>21:57</span><span>10-09-2025</span></div>
    </div>
  </footer>
</div>
</body>
</html>
```
FILE: styles.css
```css
* { box-sizing: border-box; }
body { margin: 0; background: #0a0a1f; font-family: "Open Sans", sans-serif; }
h1, h2, h3, h4, p { margin: 0; }
svg { display: block; flex: none; }
svg.defs { position: absolute; }
.screen { width: 1902px; height: 1076px; display: flex; flex-direction: column; overflow: hidden; white-space: nowrap; }

/* Browser tabs */
.tabs { height: 43px; flex: none; background: #202124; display: flex; align-items: flex-start; }
.tab-gh { margin: 8px 10px 0 8px; }
.tab-title { font-size: 15px; line-height: 34px; color: #fff; letter-spacing: -.43px; }
.tab-title.faded { width: 216px; overflow: hidden; letter-spacing: -.42px; -webkit-mask-image: linear-gradient(90deg, #000 88%, transparent); mask-image: linear-gradient(90deg, #000 88%, transparent); }
.tab-title.narrow { width: 224px; letter-spacing: -.61px; }
.cross { fill: none; stroke: #fff; stroke-width: 1.800; }
.x1 { margin: 13px 14px 0; }
.tab-sep { width: 1px; height: 28px; margin-top: 9px; background: #5f6164; }
.tab-fl { margin: 8px 12px 0 16px; }
.x2 { margin: 13px 18px 0 6px; }
.tab-active { width: 291px; height: 34px; border-radius: 17px; background: #35363a; display: flex; align-items: center; gap: 10px; padding: 0 0 0 12px; }
.tab-active .tab-title { width: 221px; }
.tab-new { margin: 10px 0 0 24px; }
.win-ctl { margin: 11px 21px 0 auto; display: flex; gap: 43px; fill: none; stroke: #fff; stroke-width: 1.100; }

/* Address bar */
.toolbar { height: 54px; flex: none; padding-bottom: 2px; background: #35363a; display: flex; align-items: center; }
.t-back { margin-left: 6px; }
.t-fwd { margin-left: 31px; }
.t-reload { margin-left: 27px; }
.t-home { margin-left: 22px; }
.omnibox { width: 1410px; height: 42px; margin-left: 18px; border-radius: 21px; background: #4a4a49; display: flex; align-items: center; padding: 0 22px 0 6px; gap: 20px; }
.info { width: 30px; height: 30px; border-radius: 50%; background: #3a3a3a; display: grid; place-items: center; }
.url { margin: 0 auto 0 -10px; font-size: 17px; letter-spacing: -.32px; color: #c3c4c5; }
.url b { font-weight: 400; color: #f1f3f4; }
.exts { flex: 1; display: grid; grid-template-columns: repeat(8, 40px); place-items: center; padding-left: 7px; }
.bookmarks { height: 39px; flex: none; background: #35363a; border-bottom: 1px solid #646568; display: flex; justify-content: flex-end; gap: 12px; padding: 6px 27px 0 0; }
.bookmarks span { font-size: 15px; line-height: 19px; letter-spacing: -.55px; color: #fff; }

/* Page */
.page { position: relative; flex: 1; min-height: 0; overflow: hidden; padding: 2px 9px 0 0;
  background: radial-gradient(circle at 20% 80%, rgba(120, 119, 198, .3) 0%, transparent 50%),
    radial-gradient(circle at 80% 20%, rgba(255, 119, 198, .3) 0%, transparent 50%),
    radial-gradient(circle at 40% 40%, rgba(120, 219, 255, .2) 0%, transparent 50%), #0f0f23; }
.progress { height: 2px; background: #00dfe2; }
.site-header { position: relative; height: 97px; padding: 0 0 0 466px; background: linear-gradient(135deg, #667eea, #764ba2); box-shadow: 0 8px 32px rgba(0, 0, 0, .35); }
.header-card { width: 944px; height: 97px; border: 1px solid #184a57; border-radius: 15px; background: #1f1e2e; box-shadow: 0 8px 32px rgba(0, 0, 0, .25); display: grid; grid-template-columns: 314px 350px 106px; padding-left: 123px; clip-path: inset(0 -50px 0 -50px); }
.brand { padding: 16px 0 0 1px; font: 300 28px/32px Roboto, sans-serif; letter-spacing: -.69px; color: #b8b3d6; text-shadow: 0 0 10px rgba(0, 255, 255, .6); }
.brand-top { display: flex; gap: 11px; }
.brand-top svg { margin: 3px 0 0 -1px; fill: #b8b3d6; filter: drop-shadow(0 0 4px rgba(0, 255, 255, .6)); }
.stetho { fill: none; stroke: #1b7e8e; stroke-width: 1.400; }
.brand strong { display: block; margin-left: -1px; font-weight: 700; color: #0ff; text-shadow: 0 0 10px rgba(0, 255, 255, .7); }
.nav { padding-top: 27px; }
.nav-row { display: flex; gap: 20px; font: 800 11.500px/22px Inter, sans-serif; letter-spacing: 1.050px; color: #fff; }
.nav-row.second { padding-left: 20px; }
.nav .wide { margin-left: 20px; }
.current { position: relative; }
.current::after { content: ""; position: absolute; left: 8px; bottom: -2px; width: 23px; height: 2px; background: #0ff; }
.account { height: 66px; margin-top: 15px; padding: 10px 6px; background: #6b6966; display: flex; flex-direction: column; }
.account span { font: 800 11.500px/22px Inter, sans-serif; letter-spacing: .85px; color: #fff; margin: 1px 0 5px 1px; }

.content { width: 944px; margin-left: 466px; }
.welcome { height: 153px; padding-top: 3px; border: 1px solid #184250; border-top: 0; border-radius: 0 0 15px 15px; background: #1f1e2e; color: #fff; }
.welcome h1 { font: 700 24px/32px Roboto, sans-serif; letter-spacing: .02px; text-shadow: 0 2px 10px rgba(255, 255, 255, .3); color: #f4f4f6; }
.welcome p { margin-top: 16px; font: 400 15px/24px Lato, sans-serif; letter-spacing: 1.080px; color: #9a95b3; }
.welcome h2 { margin-top: 21px; font: 700 17.500px/24px Roboto, sans-serif; letter-spacing: -.36px; text-shadow: 0 2px 10px rgba(255, 255, 255, .3); }
.unknown { margin-top: 11px; display: flex; align-items: center; gap: 3px; font: 400 13.500px/20px Inter, sans-serif; letter-spacing: .2px; color: #b0abc9; fill: #b8b3d6; }
.stats { height: 58px; margin: 0 -12px; padding: 0 0 0 12px; border: 1px solid #184250; border-radius: 15px; background: #1f1e2e; display: grid; grid-template-columns: repeat(4, 241.500px); color: #f4f4f6; fill: #f4f4f6; font: 500 13.500px/21px Inter, sans-serif; letter-spacing: .15px; }
.stats b { display: block; font-weight: 500; }
.stats b.tight { letter-spacing: -.5px; }
.stats span { display: flex; align-items: center; gap: 3px; }
.quick { height: 113px; margin-top: 20px; padding: 17px 20px 0; border: 1px solid #184250; border-radius: 12px; background: #1f1e2e; }
.ruled { display: flex; justify-content: center; align-items: center; gap: 5px; padding-bottom: 5px; border-bottom: 1px solid #5c1c48; font: 700 20px/30px Roboto, sans-serif; letter-spacing: .02px; color: #fff; fill: #fff; text-shadow: 0 2px 10px rgba(255, 255, 255, .3); }
.links { margin-top: 17px; display: flex; justify-content: center; gap: 3px; font: 500 13.500px/20px Inter, sans-serif; color: #0ff; fill: #0ff; }
.links a { display: flex; align-items: center; gap: 3px; }
.l1 { letter-spacing: .15px; }
.l2 { letter-spacing: -.1px; }
.l3 { letter-spacing: .25px; }
.board { height: 560px; margin: 14px -12px 0; padding: 13px 12px; border: 1px solid #184250; border-radius: 12px; background: #1f1e2e; display: flex; align-items: flex-start; gap: 25px; }
.card { border-radius: 12px; background: linear-gradient(135deg, #4facfe, #00f2fe); box-shadow: 0 8px 32px rgba(0, 0, 0, .3); display: flex; flex-direction: column; align-items: center; color: #fff; fill: #fff; }
.recent { width: 620px; flex: none; height: 338px; padding: 17px 20px 0; }
.recent .ruled { align-self: stretch; border-color: rgba(120, 80, 180, .55); }
.big-heart { margin-top: 60px; fill: #b0b0b0; }
.recent h3 { margin-top: 18px; font: 700 17px/24px Roboto, sans-serif; letter-spacing: -.15px; }
.recent p { margin-top: 12px; font: 400 13px/20px Lato, sans-serif; letter-spacing: 1px; color: #93b8df; }
.recent a { margin-top: 23px; display: flex; align-items: center; gap: 4px; font: 500 13.500px/20px Inter, sans-serif; letter-spacing: .15px; color: #0ff; fill: #0ff; }
.side { width: 297px; flex: none; }
.profile { height: 256px; padding: 18px 2px 0 0; }
.side h3 { display: flex; align-items: center; gap: 4px; font: 700 17.500px/24px Roboto, sans-serif; letter-spacing: -.44px; color: #fff; }
.avatar { margin-top: 11px; fill: #000; }
.mono { font: italic 400 64px "Liberation Serif", serif; }
.name, .mail { font: 400 13px/20px Lato, sans-serif; letter-spacing: .73px; color: #88bae0; }
.name { margin-top: 16px; font-weight: 700; letter-spacing: 1.050px; color: #a3b6db; }
.mail { margin-top: 6px; }
.btn { width: 184px; height: 40px; margin-top: 15px; border-radius: 20px; background: linear-gradient(135deg, #f093fb, #f5576c); box-shadow: 0 4px 15px rgba(0, 0, 0, .25); font: 700 13px/39px Inter, sans-serif; letter-spacing: .48px; text-align: center; color: #fff; }
.tips { height: 300px; margin-top: 20px; padding: 18px 2px 0 0; }
.tips h4 { margin-top: 8px; display: flex; align-items: center; gap: 3px; font: 700 14px/20px Roboto, sans-serif; letter-spacing: -.3px; }
.tips p { margin-top: 4px; font: 400 13px/22.800px Lato, sans-serif; letter-spacing: .72px; color: #93b8df; text-align: center; }

/* Items floating over the page */
.scroll { position: absolute; top: 0; right: 0; bottom: 0; width: 9px; background: #0c0c22; }
.scroll i { display: block; height: 592px; margin-top: 16px; border-radius: 5px; background: linear-gradient(#6183ee, #7a58b8); }
.float { position: absolute; background: #2d3135; border: 1px solid #464b4c; display: flex; align-items: center; justify-content: center; box-shadow: 0 2px 10px rgba(0, 0, 0, .3); }
.reader { left: 1858px; top: 626px; width: 30px; height: 31px; border-radius: 50%; }
.helper { left: 1851px; top: 665px; width: 42px; height: 35px; border-right: 0; border-radius: 18px 0 0 18px; }
.to-top { position: absolute; left: 1832px; top: 821px; }

/* Taskbar */
.taskbar { height: 56px; flex: none; border-top: 1px solid #414141; background: #1c1c1c; color: #fff; display: flex; align-items: flex-start; }
.weather { width: 513px; flex: none; padding: 7px 0 0 8px; display: flex; gap: 5px; }
.badge { font: 400 13px "Open Sans", sans-serif; fill: #111; }
.w-text, .lang, .clock { display: flex; flex-direction: column; font-size: 14.500px; line-height: 20px; letter-spacing: .1px; margin-top: 2px; }
.w-text .dim { color: #bcbcbc; }
.win { margin: 15px 17px 0 0; }
.search { width: 275px; flex: none; height: 40px; margin-top: 9px; padding: 0 12px 0 15px; border: 1px solid #4b4b4b; border-radius: 20px; background: #3a3a3a; display: flex; align-items: center; gap: 13px; color: #d2d2d2; font-size: 17px; letter-spacing: -.55px; }
.search span { flex: 1; }
.apps { margin: 4px 0 0 5px; display: flex; gap: 5.300px; }
.app { position: relative; width: 50px; height: 51px; border-radius: 6px; display: grid; place-items: center; }
.app.running { background: #292929; padding: 0 0 9px 4px; }
.app i { position: absolute; bottom: 1px; left: 21px; width: 8px; height: 4px; border-radius: 2px; background: #949494; }
.app i.bar { left: 15px; width: 20px; background: #f27e62; }
.tray { margin-left: auto; padding-right: 24px; display: flex; align-items: flex-start; }
.up { margin: 26px 23px 0 0; }
.cloud { margin-top: 23px; }
.lang, .clock { margin-top: 9px; font-size: 15px; }
.lang { width: 75px; align-items: center; letter-spacing: -.7px; }
.wifi { margin: 22px 10px 0 0; }
.vol { margin: 21px 9px 0 0; }
.bat { margin-top: 20px; }
.clock { margin-left: 19px; align-items: flex-end; letter-spacing: -.1px; }
```
